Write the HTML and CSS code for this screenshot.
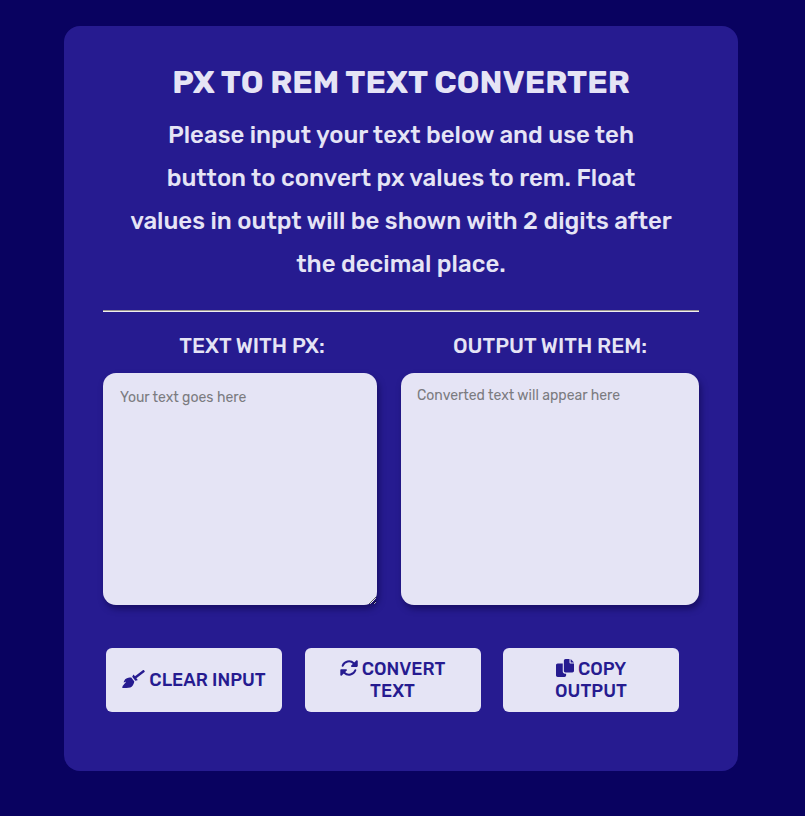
FILE: index.html
```html
<!DOCTYPE html>
<html lang="en">
<head>
  <meta charset="utf-8">
  <meta name="viewport" content="width=device-width, initial-scale=1">
  <title>PX to REM Text Converter</title>
  <link rel="stylesheet" href="styles.css">
</head>
<body>
  <main class="card">
    <header class="intro">
      <h1 class="title">PX TO REM TEXT CONVERTER</h1>
      <p class="lead">Please input your text below and use teh<br> button to convert px values to rem. Float<br> values in outpt will be shown with 2 digits after<br> the decimal place.</p>
    </header>
    <hr class="divider">
    <div class="fields">
      <div class="field">
        <label class="label" for="input">TEXT WITH PX:</label>
        <textarea class="box box-input" id="input" placeholder="Your text goes here"></textarea>
      </div>
      <div class="field">
        <label class="label" for="output">OUTPUT WITH REM:</label>
        <textarea class="box box-output" id="output" placeholder="Converted text will appear here" readonly></textarea>
      </div>
    </div>
    <div class="actions">
      <button class="button" type="button"><svg class="icon icon-wide" viewBox="0 0 640 512" aria-hidden="true"><path d="M256.47 216.77l86.73 109.18s-16.6 102.36-76.57 150.12C206.66 523.85 0 510.19 0 510.19s3.8-23.14 11-55.43l94.62-112.17c3.97-4.7-.87-11.62-6.65-9.5l-60.4 22.09c14.44-41.66 32.72-80.04 54.6-97.47 59.97-47.76 163.3-40.94 163.3-40.94zM636.53 31.03l-19.86-25c-5.49-6.9-15.52-8.05-22.41-2.56l-232.48 177.8-34.14-42.97c-5.09-6.41-15.14-5.21-18.59 2.21l-25.33 54.55 86.73 109.18 58.8-12.45c8-1.69 11.42-11.2 6.34-17.6l-34.09-42.92 232.48-177.8c6.89-5.48 8.04-15.53 2.55-22.44z"/></svg> CLEAR INPUT</button>
      <button class="button" type="button"><svg class="icon" viewBox="0 0 512 512" aria-hidden="true"><g id="turn"><path d="M76 192A190 190 0 0 1 390 122" fill="none" stroke="currentColor" stroke-width="58" stroke-linecap="round"/><path d="M463 40c15-15 41-5 41 17v143c0 13-11 24-24 24H337c-22 0-32-26-17-41z"/></g><use href="#turn" transform="rotate(180 256 256)"/></svg> CONVERT TEXT</button>
      <button class="button" type="button"><svg class="icon" viewBox="0 0 512 512" aria-hidden="true"><path d="M384 96V0H272c-26.500 0-48 21.500-48 48v288c0 26.500 21.500 48 48 48h192c26.500 0 48-21.500 48-48V128h-96c-17.600 0-32-14.400-32-32zM416 0v96h96L416 0zM192 352V128H48c-26.500 0-48 21.500-48 48v288c0 26.500 21.500 48 48 48h192c26.500 0 48-21.500 48-48v-48h-32c-35.300 0-64-28.700-64-64z"/></svg> COPY OUTPUT</button>
    </div>
  </main>
</body>
</html>
```
FILE: styles.css
```css
* {
  box-sizing: border-box;
}

body {
  margin: 0;
  padding: 26px 67px 44px 64px;
  background: #090260;
  color: #e5e4f5;
  font-family: Rubik, Roboto, sans-serif;
}

.card {
  padding: 36px 39px 59px;
  border-radius: 16px;
  background: #261b90;
}

.intro {
  text-align: center;
}

.title {
  margin: 0 0 12px;
  font-size: 32px;
  font-weight: 700;
  line-height: 40px;
}

.lead {
  margin: 0;
  font-size: 24px;
  font-weight: 500;
  line-height: 43px;
}

.divider {
  height: 2px;
  margin: 24px 0 22px;
  border: 0;
  border-top: 1px solid #9a978f;
  background: #f0eff0;
}

.fields {
  display: grid;
  grid-template-columns: 1fr 1fr;
}

.field {
  display: flex;
  flex-direction: column;
}

.label {
  margin-bottom: 15px;
  font-size: 21px;
  font-weight: 500;
  line-height: 24px;
  text-align: center;
}

.box {
  display: block;
  height: 232px;
  border: 0;
  border-radius: 13px;
  outline: 0;
  resize: none;
  background: #e5e4f5;
  box-shadow: 2px 4px 6px rgb(9 2 60 / 50%);
  color: #261b90;
  font-family: inherit;
  font-size: 14px;
  line-height: 16px;
}

.box::placeholder {
  color: #7b7b80;
}

.box-input {
  margin-right: 24px;
  padding: 17px;
  resize: vertical;
}

.box-output {
  padding: 15px 16px;
}

.actions {
  display: flex;
  justify-content: space-between;
  margin-top: 43px;
  padding: 0 20px 0 3px;
}

.button {
  width: 176px;
  height: 64px;
  padding: 0 15px;
  border: 0;
  border-radius: 6px;
  background: #e5e4f5;
  color: #261b90;
  font-family: inherit;
  font-size: 18px;
  font-weight: 500;
  line-height: 22px;
}

.button:nth-child(n + 2) {
  padding: 0 32px;
}

.icon {
  width: 18px;
  height: 18px;
  fill: currentColor;
  vertical-align: -2px;
}

.icon-wide {
  width: 23px;
}
```
